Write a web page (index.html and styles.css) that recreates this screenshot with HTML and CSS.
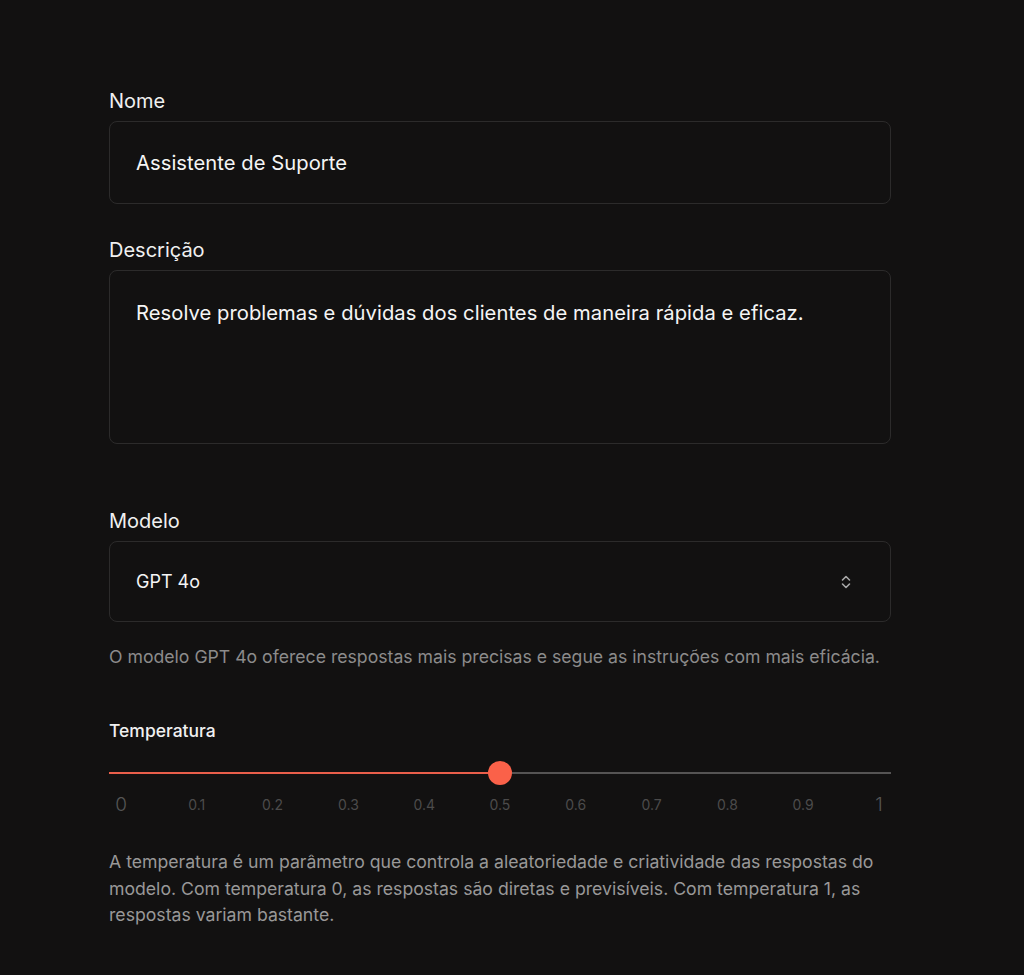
FILE: index.html
```html
<!DOCTYPE html>
<html lang="pt">
<head>
<meta charset="utf-8">
<title>Assistente</title>
<link rel="stylesheet" href="styles.css">
</head>
<body>
<main class="form">
  <div class="field">
    <label class="label">Nome</label>
    <div class="input">Assistente de Suporte</div>
  </div>
  <div class="field">
    <label class="label">Descrição</label>
    <div class="input textarea">Resolve problemas e dúvidas dos clientes de maneira rápida e eficaz.</div>
  </div>
  <div class="field field-model">
    <label class="label">Modelo</label>
    <div class="input select">
      <span>GPT 4o</span>
      <svg class="chev" width="12" height="16" viewBox="0 0 12 16" fill="none" stroke="currentColor" stroke-width="1.6" stroke-linecap="round" stroke-linejoin="round"><path d="M2.5 6 6 2.5 9.5 6"/><path d="M2.5 10 6 13.5 9.5 10"/></svg>
    </div>
    <p class="help">O modelo GPT 4o oferece respostas mais precisas e segue as instruções com mais eficácia.</p>
  </div>
  <div class="field field-temp">
    <label class="label small">Temperatura</label>
    <div class="slider">
      <div class="track"><div class="fill" style="width:50%"></div></div>
      <div class="thumb" style="left:50%"></div>
    </div>
    <div class="ticks">
      <span class="tick big">0</span>
      <span class="tick">0.1</span>
      <span class="tick">0.2</span>
      <span class="tick">0.3</span>
      <span class="tick">0.4</span>
      <span class="tick">0.5</span>
      <span class="tick">0.6</span>
      <span class="tick">0.7</span>
      <span class="tick">0.8</span>
      <span class="tick">0.9</span>
      <span class="tick big">1</span>
    </div>
    <p class="help para">A temperatura é um parâmetro que controla a aleatoriedade e criatividade das respostas do modelo. Com temperatura 0, as respostas são diretas e previsíveis. Com temperatura 1, as respostas variam bastante.</p>
  </div>
</main>
</body>
</html>
```

FILE: styles.css
```css
* { box-sizing: border-box; }
html, body {
  margin: 0;
  background: #121111;
  font-family: Inter, "Noto Sans", sans-serif;
  color: #f2f2f2;
}
.form {
  width: 782px;
  margin-left: 109px;
  padding-top: 89px;
  display: flex;
  flex-direction: column;
}
.field {
  display: flex;
  flex-direction: column;
}
.field + .field { margin-top: 34px; }
.field-model { margin-top: 65px !important; }
.field-temp { margin-top: 50px !important; }
.label {
  font-size: 20px;
  line-height: 24px;
  margin-bottom: 8px;
  color: #f0f0f0;
}
.label.small {
  font-size: 17.5px;
  font-weight: 500;
  margin-bottom: 0;
}
.input {
  border: 1px solid #2c2b2b;
  border-radius: 8px;
  height: 83px;
  padding: 0 26px;
  display: flex;
  align-items: center;
  font-size: 20.2px;
  letter-spacing: 0.05px;
  color: #f5f5f5;
}
.textarea {
  height: 174px;
  align-items: flex-start;
  padding-top: 29px;
  line-height: 26px;
}
.select {
  height: 81px;
  justify-content: space-between;
  font-size: 18px;
  letter-spacing: 0;
  padding-right: 38px;
}
.chev { color: #a8a8a8; }
.help {
  margin: 23px 0 0;
  font-size: 17.65px;
  line-height: 24px;
  color: #8c8b8b;
}
.slider {
  position: relative;
  height: 24px;
  margin-top: 18px;
}
.track {
  position: absolute;
  left: 0;
  right: 0;
  top: 11px;
  height: 2px;
  background: #555454;
}
.fill {
  height: 100%;
  background: #ea5f4b;
}
.thumb {
  position: absolute;
  top: 0;
  width: 24px;
  height: 24px;
  margin-left: -12px;
  border-radius: 50%;
  background: #fa6149;
}
.ticks {
  display: flex;
  justify-content: space-between;
  margin-top: 7px;
  height: 24px;
  align-items: center;
}
.tick {
  width: 24px;
  text-align: center;
  font-size: 14px;
  color: #4c4b4b;
}
.tick.big {
  font-size: 19px;
  font-weight: 300;
  color: #555;
}
.para {
  margin-top: 33px;
  line-height: 26.5px;
  color: #999898;
}
```
